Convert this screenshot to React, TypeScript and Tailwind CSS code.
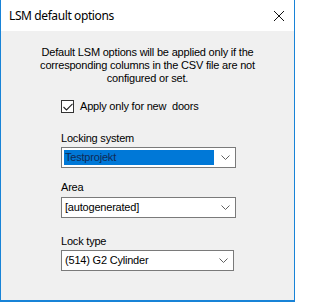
import React from "react";

const Chevron = () => (
  <svg width="9" height="5" viewBox="0 0 9 5" className="shrink-0">
    <path d="M0.5 0.5 L4.5 4.5 L8.5 0.5" fill="none" stroke="#606060" strokeWidth="1" />
  </svg>
);

const Combo = ({
  value,
  selected,
  width,
}: {
  value: string;
  selected?: boolean;
  width: string;
}) => (
  <div className={`flex h-[21px] ${width} items-center border border-[#7a7a7a] bg-white pl-[2px] pr-[5px]`}>
    {selected ? (
      <div className="flex h-[15px] flex-1 items-center bg-[#0078d7] pl-[1px] text-[#102a55]">
        {value}
      </div>
    ) : (
      <div className="flex-1 pl-[1px] text-black">{value}</div>
    )}
    <div className="ml-[7px]">
      <Chevron />
    </div>
  </div>
);

const App = () => {
  return (
    <div
      className="flex h-[302px] w-[295px] flex-col border-x border-b-2 border-[#1883d7] bg-[#f0f0f0] text-[11px] leading-[13px] tracking-[-0.2px] text-black"
      style={{ fontFamily: '"Liberation Sans", Arial, sans-serif' }}
    >
      {/* Title bar */}
      <div className="flex h-[31px] items-center justify-between bg-white pl-[8px] pr-[10px]">
        <span
          className="text-[12px] tracking-[-0.4px] text-black"
          style={{ fontFamily: '"Noto Sans", sans-serif' }}
        >
          LSM default options
        </span>
        <svg width="10" height="10" viewBox="0 0 10 10">
          <path d="M0 0 L10 10 M10 0 L0 10" stroke="#111" strokeWidth="1" />
        </svg>
      </div>

      {/* Body */}
      <div className="flex flex-col pt-[15px]">
        <p className="mx-auto w-[220px] text-center">
          Default LSM options will be applied only if the corresponding columns in the CSV file are not
          configured or set.
        </p>

        <div className="mt-[15px] flex flex-col pl-[60px]">
          <label className="flex items-center">
            <span className="flex h-[13px] w-[13px] items-center justify-center border border-[#333] bg-white">
              <svg width="10" height="8" viewBox="0 0 10 8">
                <path d="M0.5 4 L3.5 7 L9.5 0.8" fill="none" stroke="#222" strokeWidth="1.1" />
              </svg>
            </span>
            <span className="ml-[6px]">Apply only for new&nbsp; doors</span>
          </label>

          <div className="mt-[19px]">Locking system</div>
          <div className="mt-[2px]">
            <Combo value="Testprojekt" selected width="w-[175px]" />
          </div>

          <div className="mt-[13px]">Area</div>
          <div className="mt-[3px]">
            <Combo value="[autogenerated]" width="w-[175px]" />
          </div>

          <div className="mt-[17px]">Lock type</div>
          <div className="mt-[2px]">
            <Combo value="(514) G2 Cylinder" width="w-[173px]" />
          </div>
        </div>
      </div>
    </div>
  );
};

export default App;
